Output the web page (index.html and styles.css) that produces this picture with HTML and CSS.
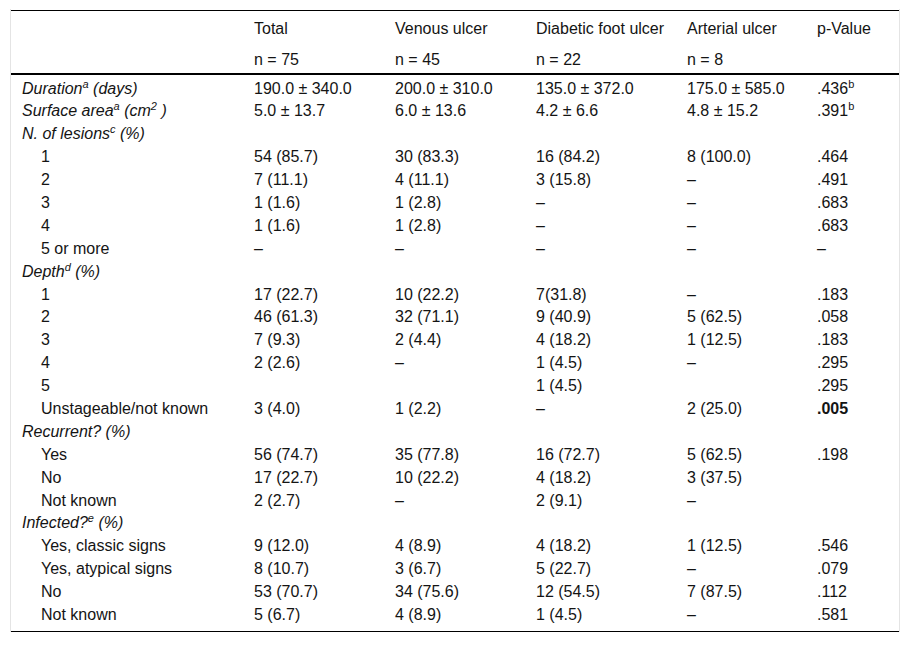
FILE: index.html
```html
<!DOCTYPE html>
<html>
<head>
<meta charset="utf-8">
<link rel="stylesheet" href="styles.css">
</head>
<body>
<div class="wrap">
<table class="tbl">
<colgroup>
<col class="c1"><col class="c2"><col class="c3"><col class="c4"><col class="c5"><col class="c6">
</colgroup>
<thead>
<tr><th></th><th>Total</th><th>Venous ulcer</th><th>Diabetic foot ulcer</th><th>Arterial ulcer</th><th>p-Value</th></tr>
<tr class="last"><th></th><th>n = 75</th><th>n = 45</th><th>n = 22</th><th>n = 8</th><th></th></tr>
</thead>
<tbody>
<tr><td class="lab">Duration<sup>a</sup> (days)</td><td>190.0 ± 340.0</td><td>200.0 ± 310.0</td><td>135.0 ± 372.0</td><td>175.0 ± 585.0</td><td>.436<sup>b</sup></td></tr>
<tr><td class="lab">Surface area<sup>a</sup> (cm<sup>2</sup> )</td><td>5.0 ± 13.7</td><td>6.0 ± 13.6</td><td>4.2 ± 6.6</td><td>4.8 ± 15.2</td><td>.391<sup>b</sup></td></tr>
<tr><td class="lab">N. of lesions<sup>c</sup> (%)</td><td></td><td></td><td></td><td></td><td></td></tr>
<tr><td class="sub">1</td><td>54 (85.7)</td><td>30 (83.3)</td><td>16 (84.2)</td><td>8 (100.0)</td><td>.464</td></tr>
<tr><td class="sub">2</td><td>7 (11.1)</td><td>4 (11.1)</td><td>3 (15.8)</td><td>–</td><td>.491</td></tr>
<tr><td class="sub">3</td><td>1 (1.6)</td><td>1 (2.8)</td><td>–</td><td>–</td><td>.683</td></tr>
<tr><td class="sub">4</td><td>1 (1.6)</td><td>1 (2.8)</td><td>–</td><td>–</td><td>.683</td></tr>
<tr><td class="sub">5 or more</td><td>–</td><td>–</td><td>–</td><td>–</td><td>–</td></tr>
<tr><td class="lab">Depth<sup>d</sup> (%)</td><td></td><td></td><td></td><td></td><td></td></tr>
<tr><td class="sub">1</td><td>17 (22.7)</td><td>10 (22.2)</td><td>7(31.8)</td><td>–</td><td>.183</td></tr>
<tr><td class="sub">2</td><td>46 (61.3)</td><td>32 (71.1)</td><td>9 (40.9)</td><td>5 (62.5)</td><td>.058</td></tr>
<tr><td class="sub">3</td><td>7 (9.3)</td><td>2 (4.4)</td><td>4 (18.2)</td><td>1 (12.5)</td><td>.183</td></tr>
<tr><td class="sub">4</td><td>2 (2.6)</td><td>–</td><td>1 (4.5)</td><td>–</td><td>.295</td></tr>
<tr><td class="sub">5</td><td></td><td></td><td>1 (4.5)</td><td></td><td>.295</td></tr>
<tr><td class="sub">Unstageable/not known</td><td>3 (4.0)</td><td>1 (2.2)</td><td>–</td><td>2 (25.0)</td><td><b>.005</b></td></tr>
<tr><td class="lab">Recurrent? (%)</td><td></td><td></td><td></td><td></td><td></td></tr>
<tr><td class="sub">Yes</td><td>56 (74.7)</td><td>35 (77.8)</td><td>16 (72.7)</td><td>5 (62.5)</td><td>.198</td></tr>
<tr><td class="sub">No</td><td>17 (22.7)</td><td>10 (22.2)</td><td>4 (18.2)</td><td>3 (37.5)</td><td></td></tr>
<tr><td class="sub">Not known</td><td>2 (2.7)</td><td>–</td><td>2 (9.1)</td><td>–</td><td></td></tr>
<tr><td class="lab">Infected?<sup>e</sup> (%)</td><td></td><td></td><td></td><td></td><td></td></tr>
<tr><td class="sub">Yes, classic signs</td><td>9 (12.0)</td><td>4 (8.9)</td><td>4 (18.2)</td><td>1 (12.5)</td><td>.546</td></tr>
<tr><td class="sub">Yes, atypical signs</td><td>8 (10.7)</td><td>3 (6.7)</td><td>5 (22.7)</td><td>–</td><td>.079</td></tr>
<tr><td class="sub">No</td><td>53 (70.7)</td><td>34 (75.6)</td><td>12 (54.5)</td><td>7 (87.5)</td><td>.112</td></tr>
<tr class="end"><td class="sub">Not known</td><td>5 (6.7)</td><td>4 (8.9)</td><td>1 (4.5)</td><td>–</td><td>.581</td></tr>
</tbody>
</table>
</div>
</body>
</html>
```
FILE: styles.css
```css
html, body {
  margin: 0;
  padding: 0;
  background: #fff;
}
body {
  font-family: "Liberation Sans", Arial, sans-serif;
  font-size: 16px;
  color: #141414;
}
.wrap {
  margin: 9px 11px 0 10px;
  width: 888px;
  border-left: 1px solid #e4e4e4;
  border-right: 1px solid #e4e4e4;
  padding-top: 1px;
}
.tbl {
  width: 888px;
  border-collapse: collapse;
  table-layout: fixed;
  border-top: 1px solid #000;
  border-bottom: 1px solid #000;
}
.c1 { width: 232px; }
.c2 { width: 141px; }
.c3 { width: 141px; }
.c4 { width: 151px; }
.c5 { width: 130px; }
.c6 { width: 93px; }
.tbl th {
  font-weight: normal;
  text-align: left;
  line-height: 18px;
  padding: 8.5px 11px 4.5px 11px;
  vertical-align: top;
  white-space: nowrap;
}
.tbl thead tr.last th {
  border-bottom: 2px solid #000;
}
.tbl td {
  line-height: 18px;
  padding: 4.5px 11px 0.4px 11px;
  vertical-align: top;
  white-space: nowrap;
}
.tbl tr.end td {
  padding-bottom: 7px;
}
.tbl td.lab {
  font-style: italic;
}
.tbl td.sub {
  padding-left: 30px;
}
.tbl sup {
  font-size: 11px;
  line-height: 0;
  vertical-align: 6px;
}
.tbl b {
  font-weight: bold;
}
```
